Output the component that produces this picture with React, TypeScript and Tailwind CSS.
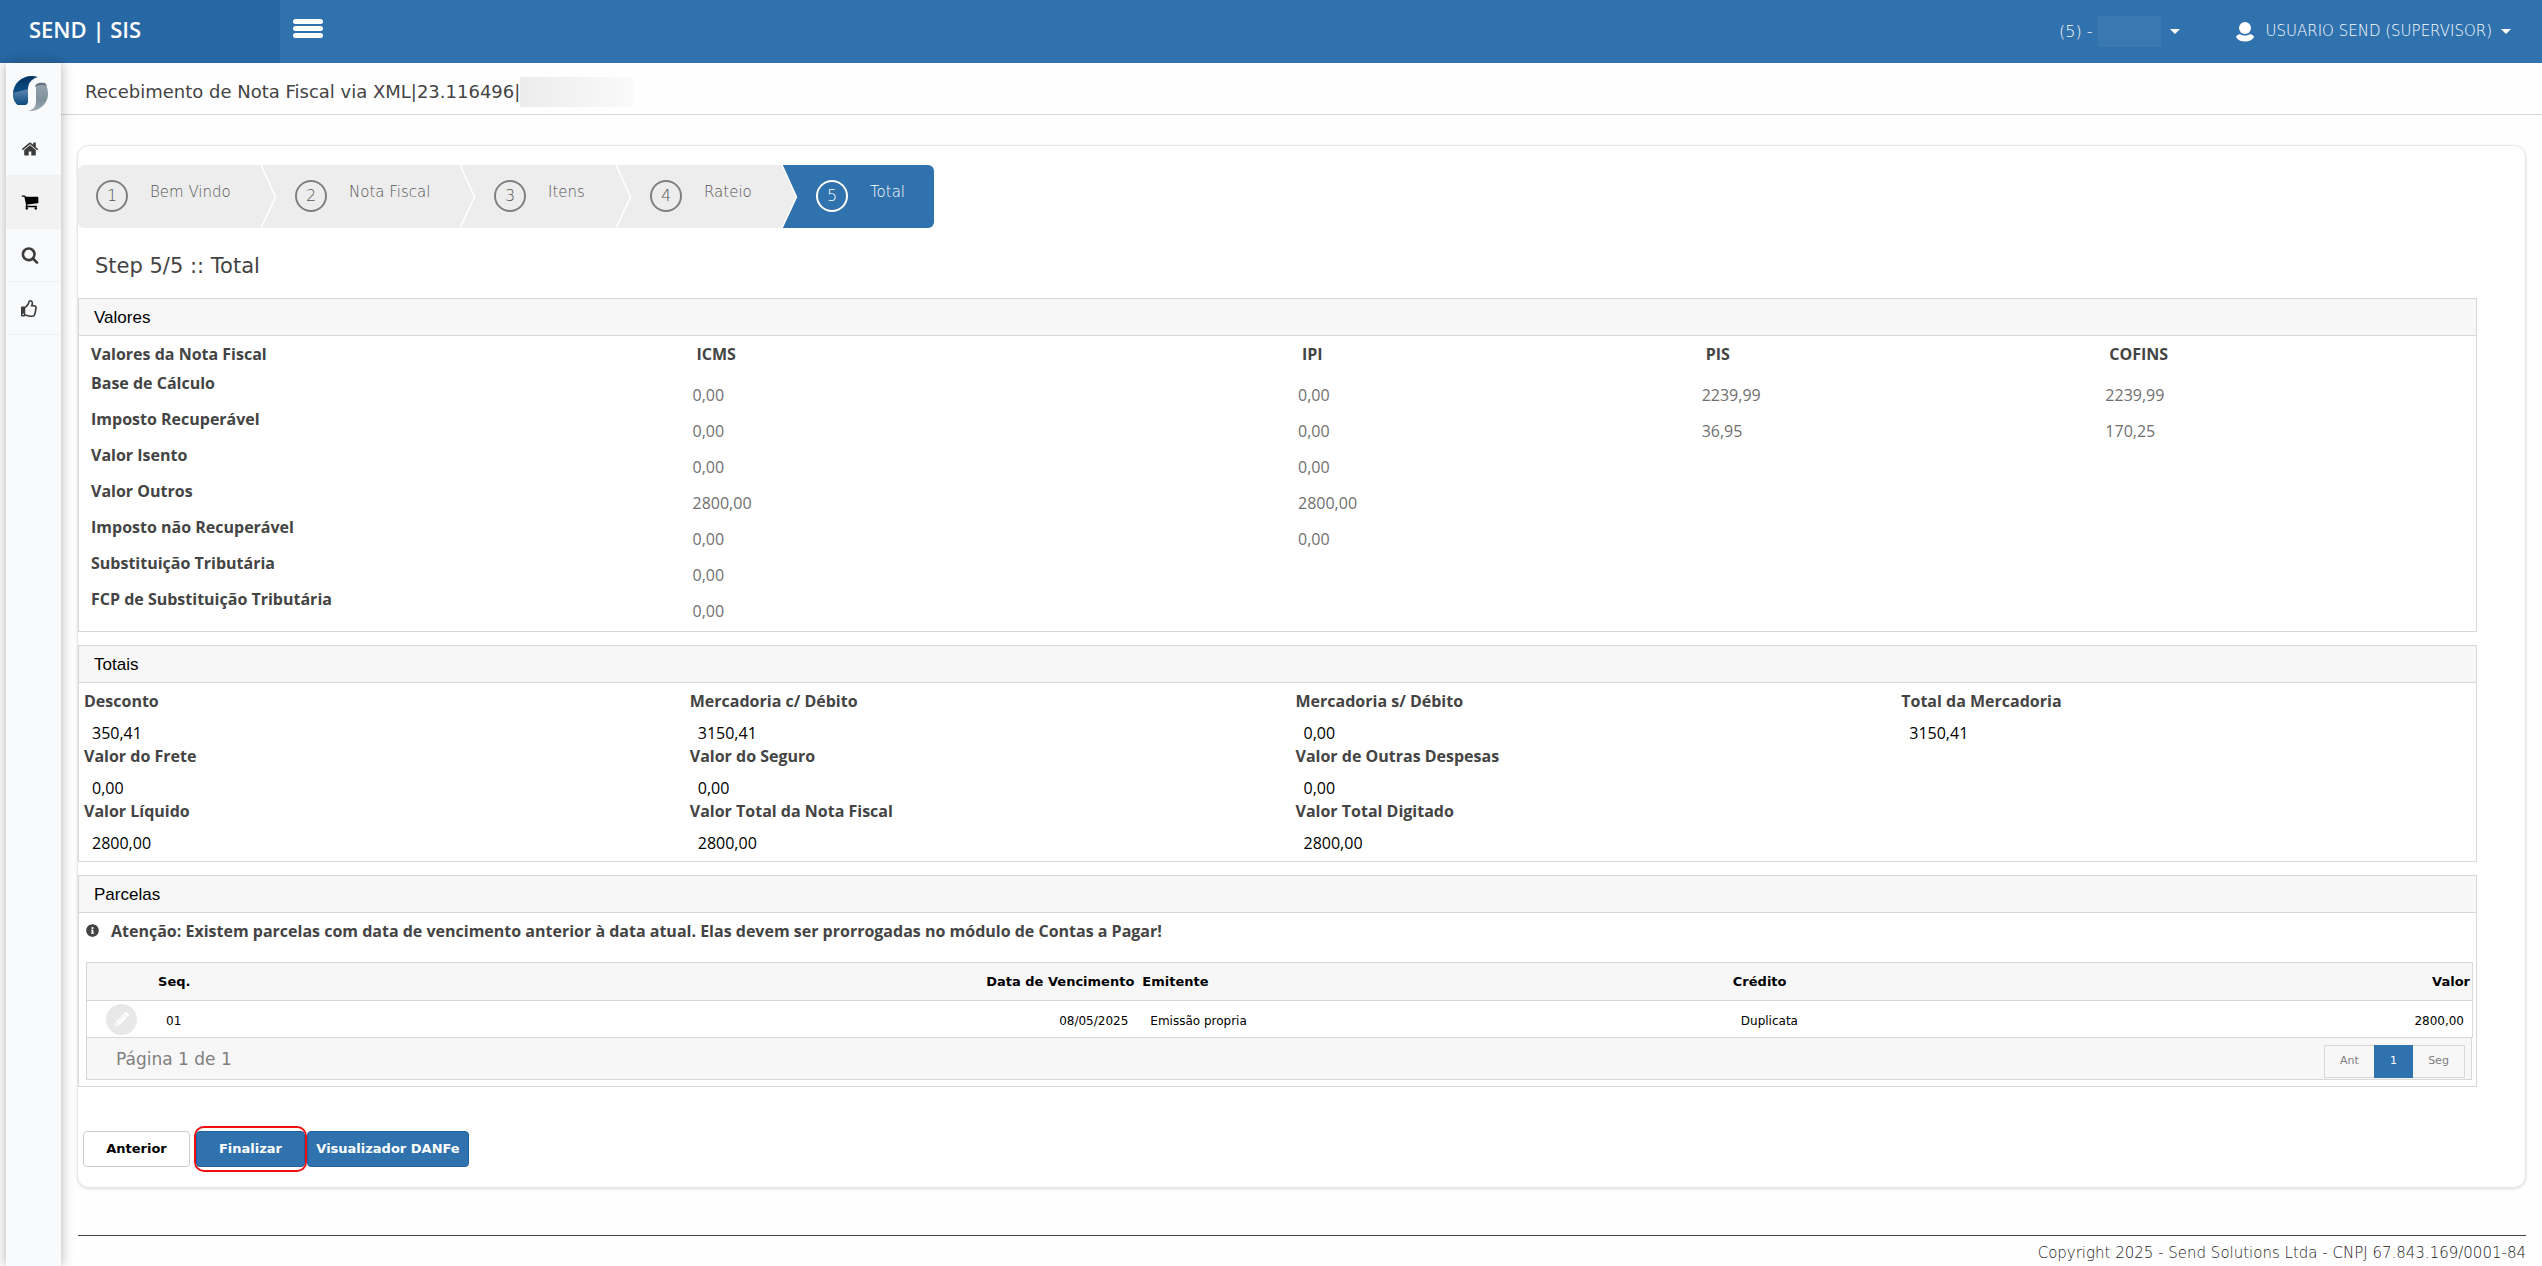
import { FaInfoCircle, FaPencilAlt, FaRegThumbsUp } from 'react-icons/fa';

const steps = [
  { id: 1, title: 'Bem Vindo', width: 'w-[183px]' },
  { id: 2, title: 'Nota Fiscal', width: 'w-[199px]' },
  { id: 3, title: 'Itens', width: 'w-[156px]' },
  { id: 4, title: 'Rateio', width: 'w-[166px]' },
  { id: 5, title: 'Total', width: 'w-[152px]' },
];

const taxes = [
  ['Base de Cálculo', '0,00', '0,00', '2239,99', '2239,99'],
  ['Imposto Recuperável', '0,00', '0,00', '36,95', '170,25'],
  ['Valor Isento', '0,00', '0,00', '', ''],
  ['Valor Outros', '2800,00', '2800,00', '', ''],
  ['Imposto não Recuperável', '0,00', '0,00', '', ''],
  ['Substituição Tributária', '0,00', '', '', ''],
  ['FCP de Substituição Tributária', '0,00', '', '', ''],
];

const totals = [
  [['Desconto', '350,41'], ['Mercadoria c/ Débito', '3150,41'], ['Mercadoria s/ Débito', '0,00'], ['Total da Mercadoria', '3150,41']],
  [['Valor do Frete', '0,00'], ['Valor do Seguro', '0,00'], ['Valor de Outras Despesas', '0,00']],
  [['Valor Líquido', '2800,00'], ['Valor Total da Nota Fiscal', '2800,00'], ['Valor Total Digitado', '2800,00']],
];

const icons = {
  home: 'M1472 992v480q0 26-19 45t-45 19h-384v-384h-256v384h-384q-26 0-45-19t-19-45v-480q0-1 .5-3t.5-3l575-474 575 474q1 2 1 6zm223-69l-62 74q-8 9-21 11h-3q-13 0-21-7l-692-577-692 577q-12 8-24 7-13-2-21-11l-62-74q-8-10-7-23.5t11-21.5l719-599q32-26 76-26t76 26l244 204v-195q0-14 9-23t23-9h192q14 0 23 9t9 23v408l219 182q10 8 11 21.5t-7 23.5z',
  cart: 'M704 1536q0 52-38 90t-90 38-90-38-38-90 38-90 90-38 90 38 38 90zm896 0q0 52-38 90t-90 38-90-38-38-90 38-90 90-38 90 38 38 90zm128-1088v512q0 24-16.5 42.5t-40.5 21.5l-1044 122q13 60 13 70 0 16-24 64h920q26 0 45 19t19 45-19 45-45 19h-1024q-26 0-45-19t-19-45q0-11 8-31.5t16-36 21.5-40 15.5-29.5l-177-823h-204q-26 0-45-19t-19-45 19-45 45-19h256q16 0 28.5 6.5t19.5 15.5 13 24.5 8 26 5.5 29.5 4.5 26h1201q26 0 45 19t19 45z',
  search: 'M1216 832q0-185-131.5-316.5t-316.5-131.5-316.5 131.5-131.5 316.5 131.5 316.5 316.5 131.5 316.5-131.5 131.5-316.5zm512 832q0 52-38 90t-90 38q-54 0-90-38l-343-342q-179 124-399 124-143 0-273.5-55.5t-225-150-150-225-55.5-273.5 55.5-273.5 150-225 225-150 273.5-55.5 273.5 55.5 225 150 150 225 55.5 273.5q0 220-124 399l343 343q37 37 37 90z',
};

function Icon({ name }: { name: keyof typeof icons }) {
  return (
    <svg width="18" height="18" viewBox="0 0 1792 1792" fill="currentColor">
      <path d={icons[name]} />
    </svg>
  );
}

function Caret() {
  return (
    <svg width="10" height="5" viewBox="0 0 10 5" fill="currentColor">
      <path d="M0 0h10L5 5z" />
    </svg>
  );
}

function Logo() {
  return (
    <svg width="35" height="35" viewBox="0 0 35 35">
      <defs>
        <linearGradient id="blue" x1="0" y1="0" x2="0" y2="1">
          <stop offset="0" stopColor="#00335f" />
          <stop offset="0.45" stopColor="#0a4a80" />
          <stop offset="1" stopColor="#0a4a80" />
        </linearGradient>
        <linearGradient id="shine" x1="0" y1="0" x2="0" y2="1">
          <stop offset="0" stopColor="#5f88ae" />
          <stop offset="1" stopColor="#0a4a80" />
        </linearGradient>
        <linearGradient id="gray" x1="0" y1="0" x2="0" y2="1">
          <stop offset="0" stopColor="#96a4ad" />
          <stop offset="0.6" stopColor="#80909b" />
          <stop offset="1" stopColor="#9eabb3" />
        </linearGradient>
      </defs>
      <path d="M25 1C12-3 0 6 0 18c0 5 2 9 5 11h6c3 0 4-2 4-5V14C15 7 18 3 25 1z" fill="url(#blue)" />
      <path d="M0 17c5-1 10-3 15-4v11c0 3-1 5-4 5H5c-3-3-5-7-5-12z" fill="url(#shine)" />
      <path d="M33 8c-2-1-10-2-10 4v13c0 6-3 9-8 10 11 1 20-7 20-17 0-4-1-7-2-10z" fill="url(#gray)" />
      <path d="M22 11c0-4 5-5 10-4l2 3c-4-2-9-1-12 1z" fill="#667783" />
    </svg>
  );
}

function Sidebar() {
  const item = 'flex h-[53px] items-center border-b border-[#f0f0f0] pl-[15px]';
  return (
    <nav className="z-10 ml-1.5 flex w-[55px] shrink-0 flex-col bg-[#f9fafc] text-[#3c3c3c] shadow-[0_0_12px_rgba(0,0,0,0.3)]">
      <a href="#" aria-label="Send" className="flex h-[60px] items-center pl-[7px]">
        <Logo />
      </a>
      <a href="#" aria-label="Início" className={item}><Icon name="home" /></a>
      <a href="#" aria-label="Compras" className={`${item} bg-[#f2f2f2] text-black`}><Icon name="cart" /></a>
      <a href="#" aria-label="Pesquisar" className={item}><Icon name="search" /></a>
      <a href="#" aria-label="Aprovar" className={item}><FaRegThumbsUp size={17} /></a>
    </nav>
  );
}

function Steps() {
  return (
    <ol className="flex h-[63px] w-fit overflow-hidden rounded-md bg-[#ededed] font-['DejaVu_Sans'] font-extralight">
      {steps.map((step, i) => {
        const active = step.id === 5;
        return (
          <li key={step.id} className={`relative ${step.width} ${active ? 'bg-[#3072ae] text-white' : 'text-[#555]'}`}>
            {i > 0 && (
              <svg className="absolute top-0 left-0" width="16" height="63" viewBox="0 0 16 63">
                <path d="M0 0l14.5 32L0 63z" fill="#ededed" />
                <path d="M0 0l14.5 32L0 63" fill="none" stroke="#fff" strokeWidth="1.5" />
              </svg>
            )}
            <div className={`flex gap-[22px] ${i > 0 ? 'pl-[34px]' : 'pl-[18px]'}`}>
              <span className={`mt-[15px] flex size-8 items-center justify-center rounded-full border-2 ${active ? 'border-white' : 'border-[#808080]'}`}>
                {step.id}
              </span>
              <span className="mt-4 text-[15px]/[22px]">{step.title}</span>
            </div>
          </li>
        );
      })}
    </ol>
  );
}

function Panel({ title, className, children }: { title: string; className: string; children: React.ReactNode }) {
  return (
    <section className={`mr-12 overflow-hidden border border-[#d8d8d8] bg-white ${className}`}>
      <h2 className="h-[37px] border-b border-[#d8d8d8] bg-[#f7f7f7] pl-[15px] font-['Liberation_Sans'] text-[17px]/[37px] text-black">
        {title}
      </h2>
      {children}
    </section>
  );
}

function Taxes() {
  const cols = 'grid grid-cols-[3fr_3fr_2fr_2fr_2fr]';
  return (
    <div className="-mr-[33px] pt-[7px] pb-1.5 pl-2">
      <div className={`${cols} text-base/[22px] font-bold`}>
        <span className="pl-1">Valores da Nota Fiscal</span>
        <span className="pl-1">ICMS</span>
        <span className="pl-1">IPI</span>
        <span className="pl-1">PIS</span>
        <span className="pl-1">COFINS</span>
      </div>
      {taxes.map(([label, ...values]) => (
        <div key={label} className={`${cols} h-9 text-base/[22px]`}>
          <span className="pt-[7px] pl-1 font-bold">{label}</span>
          {values.map((value, i) => (
            <span key={i} className="pt-[19px] text-[#707070]">{value}</span>
          ))}
        </div>
      ))}
    </div>
  );
}

function Totals() {
  return (
    <div className="-mr-[31px] pt-[7px] pb-1.5 pl-[5px]">
      {totals.map((row, i) => (
        <dl key={i} className="grid h-[55px] grid-cols-4 text-base/[22px]">
          {row.map(([label, value]) => (
            <div key={label}>
              <dt className="font-bold">{label}</dt>
              <dd className="pt-2.5 pl-2 font-medium text-black">{value}</dd>
            </div>
          ))}
        </dl>
      ))}
    </div>
  );
}

function Installments() {
  return (
    <div className="pr-[3px] pb-1.5 pl-[7px] font-['DejaVu_Sans'] text-black">
      <p className="flex h-[49px] items-start gap-3 pt-[7px] font-['Open_Sans'] text-base/[22px] font-bold text-[#444]">
        <FaInfoCircle size={13} className="mt-1" />
        Atenção: Existem parcelas com data de vencimento anterior à data atual. Elas devem ser prorrogadas no módulo de Contas a Pagar!
      </p>
      <table className="w-full table-fixed border border-[#d8d8d8]">
        <colgroup>
          <col className="w-[3%]" />
          <col className="w-[21%]" />
          <col className="w-[20%]" />
          <col className="w-[25%]" />
          <col className="w-[31%]" />
        </colgroup>
        <thead>
          <tr className="h-[38px] border-b border-[#d8d8d8] bg-[#f7f7f7] text-left text-[13px]">
            <th></th>
            <th>Seq.</th>
            <th className="pr-0.5 text-right">Data de Vencimento</th>
            <th className="pl-1.5">Emitente</th>
            <th>
              <span className="flex justify-between pr-0.5"><span>Crédito</span><span>Valor</span></span>
            </th>
          </tr>
        </thead>
        <tbody>
          <tr className="h-[37px] border-b border-[#d8d8d8] text-xs">
            <td>
              <button aria-label="Editar" className="ml-[19px] flex size-[31px] items-center justify-center rounded-full bg-[#e8e8e8] text-white">
                <FaPencilAlt size={14} />
              </button>
            </td>
            <td className="pt-1 pl-2">01</td>
            <td className="pt-1 pr-2 text-right">08/05/2025</td>
            <td className="pt-1 pl-3.5">Emissão propria</td>
            <td className="pt-1">
              <span className="flex justify-between pr-2 pl-2"><span>Duplicata</span><span>2800,00</span></span>
            </td>
          </tr>
        </tbody>
      </table>
      <div className="mr-px flex h-[42px] items-end justify-between border border-t-0 border-[#d8d8d8] bg-[#f7f7f7] pr-1.5 pb-px pl-[29px] text-[#808080]">
        <span className="text-[17px]/[38px]">Página 1 de 1</span>
        <div className="flex h-[33px] border border-[#d8d8d8] text-[11px]">
          <button className="w-[49px]">Ant</button>
          <button className="-my-px w-[39px] bg-[#3072ae] text-white">1</button>
          <button className="w-[51px]">Seg</button>
        </div>
      </div>
    </div>
  );
}

export default function App() {
  return (
    <div className="flex min-h-screen flex-col bg-[#fefefe] font-['Open_Sans',sans-serif] text-[#444]">
      <header className="flex h-[63px] items-center bg-[#3072ae] font-['DejaVu_Sans'] font-extralight text-white">
        <div className="flex h-full w-[280px] items-center bg-[#2768a4] pb-1 pl-[29px] font-['Open_Sans'] text-[22px] font-semibold">SEND | SIS</div>
        <button aria-label="Menu" className="mb-[7px] ml-[13px] flex w-[30px] flex-col gap-0.5">
          <span className="h-[5px] w-full rounded-sm bg-white" />
          <span className="h-[5px] w-full rounded-sm bg-white" />
          <span className="h-[5px] w-full rounded-sm bg-white" />
        </button>
        <button className="ml-auto flex items-center text-base">
          (5) -
          <span className="mr-[9px] ml-[5px] h-[31px] w-[63px] bg-[#3a78b2]" />
          <Caret />
        </button>
        <button className="mr-[31px] ml-[56px] flex items-center text-[15px]">
          <svg className="mr-3" width="18" height="20" viewBox="0 0 18 20" fill="#fff">
            <circle cx="9" cy="6" r="6" />
            <path d="M4 12c3 2 7 2 10 0 3 1 4 2 4 3-3 6-15 6-18 0 0-1 1-2 4-3z" />
          </svg>
          <span className="mr-[9px]">USUARIO SEND (SUPERVISOR)</span>
          <Caret />
        </button>
      </header>

      <div className="flex flex-1">
        <Sidebar />
        <main className="flex min-w-0 flex-1 flex-col">
          <div className="flex h-[52px] items-center border-b border-[#d8d8d8] pt-1.5 pl-6 font-['DejaVu_Sans']">
            <h1 className="text-lg">Recebimento de Nota Fiscal via XML|23.116496|</h1>
            <span className="h-[30px] w-[113px] bg-gradient-to-r from-[#ececec] to-[#fafafa]" />
          </div>

          <div className="mt-[30px] mr-4 ml-4 rounded-xl border border-[#e8e8e8] bg-white pt-[19px] pb-[15px] shadow-sm">
            <Steps />
            <h2 className="h-[70px] pt-6 pl-[17px] font-['DejaVu_Sans'] text-[21px]/[28px]">Step 5/5 :: Total</h2>
            <Panel title="Valores" className="h-[334px]"><Taxes /></Panel>
            <Panel title="Totais" className="mt-[13px] h-[217px]"><Totals /></Panel>
            <Panel title="Parcelas" className="mt-[13px] h-[212px]"><Installments /></Panel>
            <div className="mt-[39px] flex items-center pl-[5px] font-['DejaVu_Sans'] text-[13px] font-bold">
              <button className="h-9 w-[107px] rounded border border-[#ccc] text-black">Anterior</button>
              <span className="ml-1 rounded-[10px] border-2 border-[#f01010] py-[3px]">
                <button className="block h-9 w-[109px] rounded border border-[#1f60a0] bg-[#3072ae] text-white">Finalizar</button>
              </span>
              <button className="h-9 w-[162px] rounded border border-[#1f60a0] bg-[#3072ae] text-white">Visualizador DANFe</button>
            </div>
          </div>

          <footer className="mt-[47px] mr-4 ml-[17px] border-t border-[#444] pt-1.5 text-right font-['DejaVu_Sans'] text-[15px]/[22px] font-extralight text-[#222]">
            Copyright 2025 - Send Solutions Ltda - CNPJ 67.843.169/0001-84
          </footer>
        </main>
      </div>
    </div>
  );
}
